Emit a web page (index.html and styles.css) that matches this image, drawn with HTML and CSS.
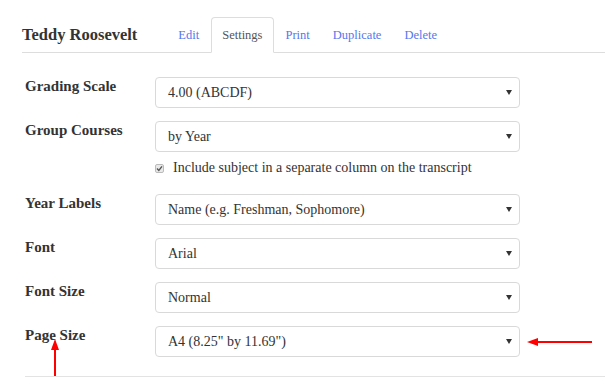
FILE: index.html
```html
<!DOCTYPE html>
<html lang="en">
<head>
  <meta charset="utf-8">
  <title>Teddy Roosevelt - Settings</title>
  <link rel="stylesheet" href="styles.css">
</head>
<body>
  <div class="page">
    <div class="header">
      <h2 class="student-name">Teddy Roosevelt</h2>
      <ul class="tabs">
        <li><a href="#">Edit</a></li>
        <li class="active"><a href="#">Settings</a></li>
        <li><a href="#">Print</a></li>
        <li><a href="#">Duplicate</a></li>
        <li><a href="#">Delete</a></li>
      </ul>
    </div>

    <form class="settings">
      <div class="row">
        <label class="row-label">Grading Scale</label>
        <div class="field">
          <div class="select-wrap">
            <select><option>4.00 (ABCDF)</option></select>
          </div>
        </div>
      </div>

      <div class="row">
        <label class="row-label">Group Courses</label>
        <div class="field">
          <div class="select-wrap">
            <select><option>by Year</option></select>
          </div>
          <div class="check-line">
            <span class="check">
              <svg width="7" height="7" viewBox="0 0 7 7"><path d="M1 3.6 L2.8 5.4 L6 1.4" fill="none" stroke="#555" stroke-width="1.4"/></svg>
            </span>
            Include subject in a separate column on the transcript
          </div>
        </div>
      </div>

      <div class="row">
        <label class="row-label">Year Labels</label>
        <div class="field">
          <div class="select-wrap">
            <select><option>Name (e.g. Freshman, Sophomore)</option></select>
          </div>
        </div>
      </div>

      <div class="row">
        <label class="row-label">Font</label>
        <div class="field">
          <div class="select-wrap">
            <select><option>Arial</option></select>
          </div>
        </div>
      </div>

      <div class="row">
        <label class="row-label">Font Size</label>
        <div class="field">
          <div class="select-wrap">
            <select><option>Normal</option></select>
          </div>
        </div>
      </div>

      <div class="row">
        <label class="row-label">Page Size</label>
        <div class="field">
          <div class="select-wrap">
            <select><option>A4 (8.25" by 11.69")</option></select>
          </div>
        </div>
      </div>
    </form>
  </div>

  <!-- annotation arrows -->
  <svg class="marks" width="605" height="380" viewBox="0 0 605 380">
    <line x1="55" y1="376" x2="55" y2="348" stroke="#f00" stroke-width="2"/>
    <path d="M55 339 L51 350 L59 350 Z" fill="#f00"/>
    <line x1="592" y1="342" x2="536" y2="342" stroke="#f00" stroke-width="2"/>
    <path d="M527 342 L538 338 L538 346 Z" fill="#f00"/>
  </svg>
</body>
</html>
```

FILE: styles.css
```css
body {
  margin: 0;
  font-family: "Liberation Serif", Georgia, serif;
  font-size: 14px;
  color: #333;
  background: #fff;
  overflow: hidden;
}
.page {
  padding: 17px 0 0 22px;
}
.header {
  display: flex;
  align-items: flex-end;
  border-bottom: 1px solid #ddd;
  height: 35px;
}
.student-name {
  margin: 0 30px 0 0;
  font-size: 16.5px;
  font-weight: bold;
  line-height: 35px;
  color: #333;
}
.tabs {
  display: flex;
  list-style: none;
  margin: 0 0 -1px 0;
  padding: 0;
}
.tabs li {
  margin-right: 1px;
}
.tabs a {
  display: block;
  padding: 0 10px;
  font-size: 12.5px;
  line-height: 34px;
  border: 1px solid transparent;
  border-radius: 4px 4px 0 0;
  color: #5577ee;
  text-decoration: none;
}
.tabs .active a {
  color: #555;
  border-color: #ddd;
  border-bottom-color: #fff;
  background: #fff;
}
.settings {
  margin: 24px 0 0 3px;
  padding-bottom: 19px;
  border-bottom: 1px solid #e3e3e3;
}
.row {
  display: flex;
  margin-bottom: 13px;
}
.row:last-child {
  margin-bottom: 0;
}
.row-label {
  width: 130px;
  padding-top: 1px;
  font-size: 15px;
  font-weight: bold;
  line-height: 16px;
}
.field {
  width: 365px;
}
.select-wrap {
  position: relative;
}
.select-wrap::after {
  content: "";
  position: absolute;
  right: 8px;
  top: 13px;
  border-left: 3px solid transparent;
  border-right: 3px solid transparent;
  border-top: 5px solid #333;
}
.select-wrap select {
  appearance: none;
  -webkit-appearance: none;
  width: 100%;
  height: 31px;
  padding: 0 12px;
  border: 1px solid #d9d9d9;
  border-radius: 4px;
  background: #fff;
  font-family: inherit;
  font-size: 14px;
  color: #333;
}
.check-line {
  display: flex;
  align-items: center;
  margin-top: 8px;
  margin-bottom: 5px;
  line-height: 16px;
  white-space: nowrap;
}
.check {
  display: inline-flex;
  align-items: center;
  justify-content: center;
  width: 7px;
  height: 7px;
  margin-right: 9px;
  border: 1px solid #bbb;
  border-radius: 2px;
  background: #e9e9e9;
}
.marks {
  position: absolute;
  left: 0;
  top: 0;
  pointer-events: none;
}
```
